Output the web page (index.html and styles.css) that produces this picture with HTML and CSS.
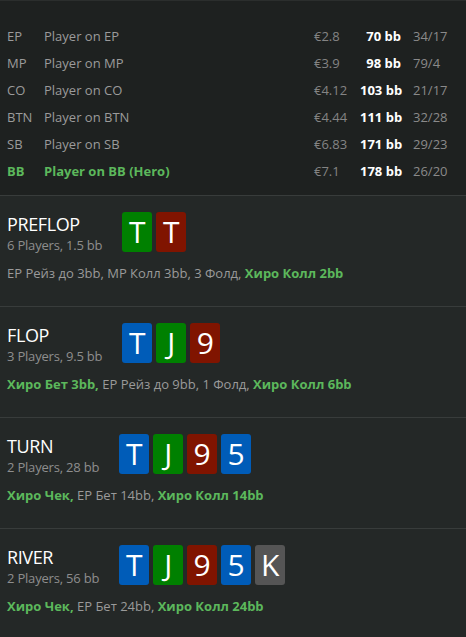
FILE: index.html
```html
<!DOCTYPE html>
<html>
<head>
<meta charset="utf-8">
<link rel="stylesheet" href="styles.css">
</head>
<body>
<div class="players">
  <div class="row"><span class="pos">EP</span><span class="name">Player on EP</span><span class="eur">€2.8</span><span class="bb">70 bb</span><span class="ratio">34/17</span></div>
  <div class="row"><span class="pos">MP</span><span class="name">Player on MP</span><span class="eur">€3.9</span><span class="bb">98 bb</span><span class="ratio">79/4</span></div>
  <div class="row"><span class="pos">CO</span><span class="name">Player on CO</span><span class="eur">€4.12</span><span class="bb">103 bb</span><span class="ratio">21/17</span></div>
  <div class="row"><span class="pos">BTN</span><span class="name">Player on BTN</span><span class="eur">€4.44</span><span class="bb">111 bb</span><span class="ratio">32/28</span></div>
  <div class="row"><span class="pos">SB</span><span class="name">Player on SB</span><span class="eur">€6.83</span><span class="bb">171 bb</span><span class="ratio">29/23</span></div>
  <div class="row hero"><span class="pos">BB</span><span class="name">Player on BB (Hero)</span><span class="eur">€7.1</span><span class="bb">178 bb</span><span class="ratio">26/20</span></div>
</div>

<div class="street">
  <div class="head">
    <div class="info">
      <div class="title">PREFLOP</div>
      <div class="sub">6 Players, 1.5 bb</div>
    </div>
    <div class="cards">
      <span class="card c-green">T</span><span class="card c-red">T</span>
    </div>
  </div>
  <div class="actions">EP Рейз до 3bb, MP Колл 3bb, 3 Фолд, <b class="me">Хиро Колл 2bb</b></div>
</div>

<div class="street">
  <div class="head">
    <div class="info">
      <div class="title">FLOP</div>
      <div class="sub">3 Players, 9.5 bb</div>
    </div>
    <div class="cards">
      <span class="card c-blue">T</span><span class="card c-green">J</span><span class="card c-red">9</span>
    </div>
  </div>
  <div class="actions"><b class="me">Хиро Бет 3bb,</b> EP Рейз до 9bb, 1 Фолд, <b class="me">Хиро Колл 6bb</b></div>
</div>

<div class="street">
  <div class="head">
    <div class="info">
      <div class="title">TURN</div>
      <div class="sub">2 Players, 28 bb</div>
    </div>
    <div class="cards">
      <span class="card c-blue">T</span><span class="card c-green">J</span><span class="card c-red">9</span><span class="card c-blue">5</span>
    </div>
  </div>
  <div class="actions"><b class="me">Хиро Чек,</b> EP Бет 14bb, <b class="me">Хиро Колл 14bb</b></div>
</div>

<div class="street">
  <div class="head">
    <div class="info">
      <div class="title">RIVER</div>
      <div class="sub">2 Players, 56 bb</div>
    </div>
    <div class="cards">
      <span class="card c-blue">T</span><span class="card c-green">J</span><span class="card c-red">9</span><span class="card c-blue">5</span><span class="card c-gray">K</span>
    </div>
  </div>
  <div class="actions"><b class="me">Хиро Чек,</b> EP Бет 24bb, <b class="me">Хиро Колл 24bb</b></div>
</div>
</body>
</html>
```

FILE: styles.css
```css
html, body {
  margin: 0;
  padding: 0;
}
body {
  background: #242827;
  font-family: "Open Sans", "Noto Sans", sans-serif;
  color: #9a9a9a;
}
.players {
  background: #1e2120;
  border-top: 1px solid #2b2e2d;
  padding: 21px 0 11px 7px;
}
.row {
  display: grid;
  grid-template-columns: 37px 1fr 46px 41px 65px;
  height: 27px;
  align-items: center;
  font-size: 13px;
  white-space: nowrap;
}
.pos, .name { color: #9b9b9b; }
.eur { color: #848484; }
.bb { color: #ffffff; font-weight: 700; text-align: right; }
.ratio { color: #8a8a8a; padding-left: 12px; }
.hero .pos, .hero .name { color: #5cb85c; font-weight: 700; }

.street {
  border-top: 1px solid #383c3b;
  padding: 16px 0 23px 7px;
}
.head {
  display: flex;
  align-items: flex-start;
  gap: 20px;
}
.title {
  color: #ffffff;
  font-size: 18px;
  line-height: 24px;
  letter-spacing: -0.4px;
}
.sub {
  color: #8e8e8e;
  font-size: 13px;
  line-height: 18px;
  letter-spacing: -0.2px;
  white-space: nowrap;
}
.cards {
  display: flex;
  gap: 4px;
}
.card {
  width: 30px;
  height: 40px;
  border-radius: 3px;
  color: #ffffff;
  font-size: 30px;
  line-height: 40px;
  text-align: center;
}
.c-green { background: #008000; }
.c-red { background: #801400; }
.c-blue { background: #005cb8; }
.c-gray { background: #555555; }
.actions {
  margin-top: 9px;
  font-size: 13px;
  line-height: 20px;
  color: #9a9a9a;
  white-space: nowrap;
}
.me {
  color: #5cb85c;
  font-weight: 700;
}
```
